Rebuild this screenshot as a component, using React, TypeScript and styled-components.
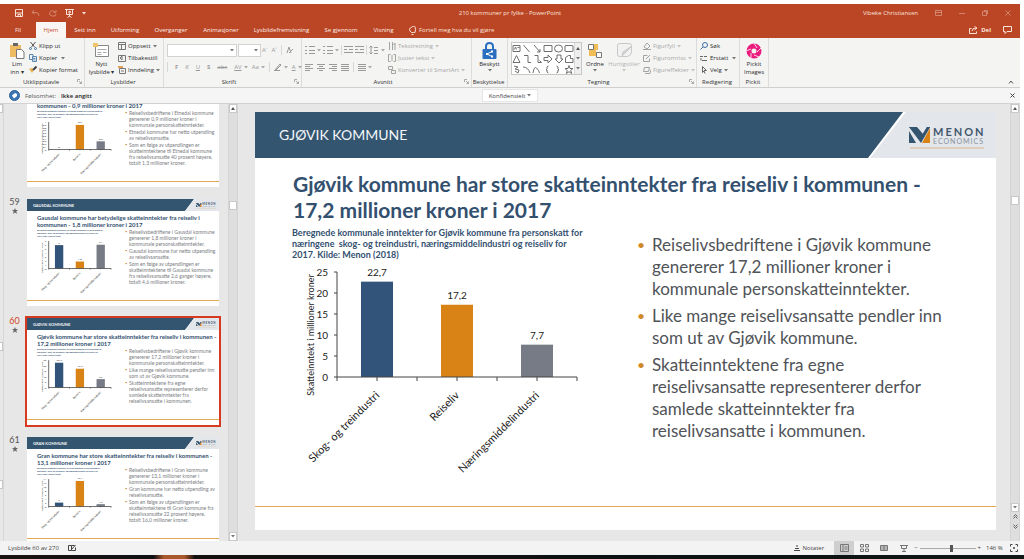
import React from "react";
import styled, { createGlobalStyle, css } from "styled-components";

const UI = '"Open Sans", "Noto Sans", sans-serif';
const SLIDE = 'Lato, "Open Sans", sans-serif';
const NAVY = "#34556f";
const ORANGE = "#d98317";
const GREY = "#767b86";

const GlobalStyle = createGlobalStyle`
  * { box-sizing: border-box; }
  body { margin: 0; background: #fff; font-family: ${UI}; color: #2b2b2b; }
  button, select, input { font: inherit; color: inherit; margin: 0; }
  svg { display: block; flex: none; }
`;

const Screen = styled.div`
  height: 100vh;
  min-width: 900px;
  display: flex;
  flex-direction: column;
  padding-top: 4px;
  overflow: hidden;
  font-size: 6px;
  line-height: 8px;
`;

const Window = styled.div`
  flex: 1;
  min-height: 0;
  margin-right: 4px;
  display: flex;
  flex-direction: column;
  background: #f4f4f3;
`;

/* ---------- title bar and tabs ---------- */

const Header = styled.header`
  background: #ba4626;
  color: #fbe3da;
`;

const TitleBar = styled.div`
  height: 18px;
  display: grid;
  grid-template-columns: 1fr auto 1fr;
  align-items: center;
`;

const QuickAccess = styled.div`
  display: flex;
  align-items: center;
  gap: 8px;
  padding-left: 15px;
`;

const WindowTools = styled.div`
  display: flex;
  align-items: center;
  justify-content: flex-end;
  gap: 17px;
  padding-right: 9px;
`;

const PlainButton = styled.button<{ $dim?: boolean }>`
  display: flex;
  align-items: center;
  gap: 3px;
  padding: 0;
  border: 0;
  background: none;
  white-space: nowrap;
  opacity: ${(p) => (p.$dim ? 0.4 : 1)};
`;

const TabBar = styled.nav`
  height: 16px;
  display: flex;
  align-items: stretch;
  padding-right: 8px;
`;

const Tab = styled.button<{ $active?: boolean; $w: number }>`
  width: ${(p) => p.$w}px;
  padding: 0;
  border: 0;
  white-space: nowrap;
  text-align: center;
  background: ${(p) => (p.$active ? "#f8f5f3" : "none")};
  color: ${(p) => (p.$active ? "#c2502f" : "#fdeee8")};
`;

const TabExtra = styled.div<{ $end?: boolean }>`
  display: flex;
  align-items: center;
  gap: 12px;
  margin-left: ${(p) => (p.$end ? "auto" : "7px")};
`;

/* ---------- ribbon ---------- */

const Ribbon = styled.div`
  height: 50px;
  display: flex;
  padding-left: 5px;
  border-bottom: 1px solid #cfcfcf;
`;

const GroupBox = styled.section<{ $w: number }>`
  width: ${(p) => p.$w}px;
  display: flex;
  flex-direction: column;
  border-right: 1px solid #dcdcdc;
`;

const GroupBody = styled.div<{ $center?: boolean }>`
  height: 38px;
  display: flex;
  gap: 3px;
  padding: 2px 0 0 3px;
  ${(p) =>
    p.$center &&
    css`
      justify-content: center;
      padding-left: 0;
    `}
`;

const GroupLabel = styled.div`
  display: flex;
  align-items: center;
  height: 11px;
  padding-right: 2px;
  color: #333;
  span {
    flex: 1;
    text-align: center;
    white-space: nowrap;
  }
`;

const BigButton = styled.button<{ $dim?: boolean; $w: number }>`
  width: ${(p) => p.$w}px;
  display: flex;
  flex-direction: column;
  align-items: center;
  gap: 1px;
  padding: 2px 0 0;
  border: 0;
  background: none;
  white-space: pre;
  text-align: center;
  opacity: ${(p) => (p.$dim ? 0.35 : 1)};
`;

const BigIcon = styled.span`
  height: 17px;
  display: grid;
  place-items: center;
`;

const Stack = styled.div`
  display: flex;
  flex-direction: column;
`;

const SmallButton = styled.button<{ $dim?: boolean }>`
  height: 12px;
  display: flex;
  align-items: center;
  gap: 2px;
  padding: 0;
  border: 0;
  background: none;
  white-space: nowrap;
  opacity: ${(p) => (p.$dim ? 0.4 : 1)};
`;

const ToolRow = styled.div<{ $gap: number; $h: number }>`
  height: ${(p) => p.$h}px;
  display: flex;
  align-items: center;
  gap: ${(p) => p.$gap}px;
  color: #9a9a9a;
`;

const FontSelect = styled.select<{ $w: number }>`
  appearance: none;
  width: ${(p) => p.$w}px;
  height: 13px;
  border: 1px solid #d2d2d2;
  border-radius: 0;
  background: #fff;
`;

const SelectWrap = styled.label`
  position: relative;
  display: flex;
  svg {
    position: absolute;
    right: 3px;
    top: 5px;
  }
`;

const Separator = styled.i`
  width: 1px;
  height: 10px;
  background: #d8d8d8;
`;

const Gallery = styled.div`
  display: flex;
  height: 33px;
  margin-top: 2px;
  border: 1px solid #c8c8c8;
  background: #fff;
`;

const GalleryScroll = styled.div`
  width: 7px;
  display: grid;
  grid-template-rows: repeat(3, 1fr);
  place-items: center;
  background: #efefef;
  border-left: 1px solid #d8d8d8;
`;

const Collapse = styled.div`
  margin-left: auto;
  display: flex;
  align-items: flex-end;
  padding: 0 6px 3px 0;
`;

const Sensitivity = styled.div`
  height: 16px;
  display: grid;
  grid-template-columns: 1fr auto 1fr;
  align-items: center;
  background: #f5f5f5;
  border-bottom: 1px solid #d2d2d2;
`;

const SensitivityLabel = styled.div`
  display: flex;
  align-items: center;
  gap: 5px;
  padding-left: 9px;
  color: #555;
  b {
    font-weight: 600;
    color: #222;
  }
`;

const SensitivityChoice = styled.button`
  height: 13px;
  padding: 0 6px;
  display: flex;
  align-items: center;
  gap: 2px;
  border: 1px solid #e6e6e6;
  background: #fff;
  color: #444;
`;

const CloseCell = styled.div`
  display: flex;
  justify-content: flex-end;
  padding-right: 5px;
`;

/* ---------- work area ---------- */

const Work = styled.main`
  flex: 1;
  min-height: 0;
  display: flex;
  background: #e7e7e7;
`;

const EdgeStrip = styled.div`
  width: 4px;
  display: flex;
  flex-direction: column;
  align-items: flex-start;
  border-right: 1px solid #d6d6d6;
  i {
    width: 3px;
    height: 9px;
    background: #fff;
    border: 1px solid #c6c6c6;
    border-left: 0;
  }
`;

const ThumbPane = styled.aside`
  width: 224px;
  overflow: hidden;
`;

const ThumbList = styled.ol`
  list-style: none;
  margin: -26px 0 0;
  padding: 0;
  display: flex;
  flex-direction: column;
  gap: 8px;
`;

const ThumbItem = styled.li`
  display: flex;
  align-items: flex-start;
`;

const ThumbNumber = styled.div<{ $active?: boolean }>`
  width: 21px;
  display: flex;
  flex-direction: column;
  align-items: center;
  gap: 1px;
  font: 9px/10px ${SLIDE};
  color: ${(p) => (p.$active ? "#d24726" : "#555")};
`;

const ThumbFrame = styled.div<{ $active?: boolean }>`
  width: 196px;
  height: 111px;
  display: flex;
  border: 2px solid ${(p) => (p.$active ? "#d63a20" : "transparent")};
`;

const ScrollTrack = styled.div`
  width: 10px;
  display: flex;
  flex-direction: column;
  align-items: center;
  background: #dedede;
  border-left: 1px solid #d4d4d4;
  border-right: 1px solid #d4d4d4;
`;

const ScrollBox = styled.button`
  width: 8px;
  height: 9px;
  display: grid;
  place-items: center;
  padding: 0;
  border: 1px solid #c9c9c9;
  background: #fff;
`;

const Spacer = styled.div<{ $grow: number }>`
  flex: ${(p) => p.$grow} 1 0;
`;

const SpreadButtons = styled.div`
  display: flex;
  flex-direction: column;
  align-items: center;
  gap: 5px;
  padding: 2px 0 12px;
`;

const Stage = styled.section`
  flex: 1;
  min-width: 0;
  display: flex;
  padding: 8px 14px 11px 17px;
`;

/* ---------- slide ---------- */

type Size = "large" | "small";

const SlideBox = styled.article`
  flex: 1;
  min-width: 0;
  display: flex;
  flex-direction: column;
  overflow: hidden;
  background: #fff;
  font-family: ${SLIDE};
`;

const Banner = styled.div<{ $size: Size }>`
  flex: none;
  display: flex;
  justify-content: space-between;
  background: #e3e6ea;
  height: ${(p) => (p.$size === "large" ? 46 : 12)}px;
`;

const BannerEdge = styled.div<{ $size: Size }>`
  flex: 1;
  display: flex;
  background: #fff;
  clip-path: polygon(0 0, 100% 0, calc(100% - ${(p) => (p.$size === "large" ? 36 : 10)}px) 100%, 0 100%);
`;

const BannerName = styled.h1<{ $size: Size }>`
  flex: 1;
  margin: 0;
  display: flex;
  align-items: center;
  background: ${NAVY};
  color: #f3f7fa;
  ${(p) =>
    p.$size === "large"
      ? css`
          padding-left: 24px;
          font: 400 14px/20px ${SLIDE};
          margin-right: 3px;
          clip-path: polygon(0 0, 100% 0, calc(100% - 35px) 100%, 0 100%);
        `
      : css`
          padding-left: 6px;
          font: 700 4px/5px ${SLIDE};
          margin-right: 1px;
          clip-path: polygon(0 0, 100% 0, calc(100% - 9px) 100%, 0 100%);
        `}
`;

const SlideTitle = styled.h2<{ $size: Size }>`
  margin: 0;
  color: #33506f;
  white-space: pre;
  ${(p) =>
    p.$size === "large"
      ? css`
          padding: 13px 0 0 38px;
          font: 700 21px/26px ${SLIDE};
        `
      : css`
          padding: 3px 0 0 10px;
          font: 700 6px/7px ${SLIDE};
        `}
`;

const Columns = styled.div<{ $size: Size }>`
  flex: 1;
  min-height: 0;
  display: grid;
  ${(p) =>
    p.$size === "large"
      ? css`
          grid-template-columns: 345px 1fr;
          padding: 4px 0 0 37px;
        `
      : css`
          grid-template-columns: 89px 1fr;
          padding: 1px 0 0 10px;
        `}
`;

const Caption = styled.p<{ $size: Size }>`
  margin: 0;
  white-space: pre;
  color: #33506f;
  ${(p) =>
    p.$size === "large"
      ? css`
          font: 700 9px/11px ${SLIDE};
        `
      : css`
          font: 700 2px/3px ${SLIDE};
        `}
`;

const Bullets = styled.ul<{ $size: Size }>`
  margin: 0;
  list-style: none;
  display: flex;
  flex-direction: column;
  li {
    position: relative;
    white-space: pre;
  }
  li::before {
    content: "•";
    position: absolute;
    color: #cf8a2a;
  }
  ${(p) =>
    p.$size === "large"
      ? css`
          padding: 7px 0 0 15px;
          gap: 5px;
          font: 17px/22px ${SLIDE};
          color: #505357;
          li::before {
            left: -15px;
            font-size: 14px;
          }
        `
      : css`
          padding: 0 0 0 3px;
          gap: 1px;
          font: 5px/6px ${SLIDE};
          color: #7a7d82;
          li::before {
            left: -4px;
            font-size: 4px;
          }
        `}
`;

const FootLine = styled.div<{ $size: Size }>`
  flex: none;
  border-top: 1px solid #e2a856;
  height: ${(p) => (p.$size === "large" ? 24 : 6)}px;
`;

interface SlideData {
  no: number;
  name: string;
  title: string;
  caption: string;
  max: number;
  step: number;
  values: number[];
  bullets: string[];
}

const caption = (k: string) =>
  `Beregnede kommunale inntekter for ${k} kommune fra personskatt for\nnæringene  skog- og treindustri, næringsmiddelindustri og reiseliv for\n2017. Kilde: Menon (2018)`;

const slides: SlideData[] = [
  {
    no: 58,
    name: "ETNEDAL KOMMUNE",
    title: "Etnedal kommune har skatteinntekter fra reiseliv i\nkommunen - 0,9 millioner kroner i 2017",
    caption: caption("Etnedal"),
    max: 1,
    step: 0.1,
    values: [0, 0.9, 0.3],
    bullets: [
      "Reiselivsbedriftene i Etnedal kommune\ngenererer 0,9 millioner kroner i\nkommunale personskatteinntekter.",
      "Etnedal kommune har netto utpendling\nav reiselivsansatte.",
      "Som en følge av utpendlingen er\nskatteinntektene til Etnedal kommune\nfra reiselivsansatte 40 prosent høyere,\ntotalt 1,3 millioner kroner.",
    ],
  },
  {
    no: 59,
    name: "GAUSDAL KOMMUNE",
    title: "Gausdal kommune har betydelige skatteinntekter fra reiseliv i\nkommunen - 1,8 millioner kroner i 2017",
    caption: caption("Gausdal"),
    max: 7,
    step: 1,
    values: [6, 1.8, 6.1],
    bullets: [
      "Reiselivsbedriftene i Gausdal kommune\ngenererer 1,8 millioner kroner i\nkommunale personskatteinntekter.",
      "Gausdal kommune har netto utpendling\nav reiselivsansatte.",
      "Som en følge av utpendlingen er\nskatteinntektene til Gausdal kommune\nfra reiselivsansatte 2,6 ganger høyere,\ntotalt 4,6 millioner kroner.",
    ],
  },
  {
    no: 60,
    name: "GJØVIK KOMMUNE",
    title: "Gjøvik kommune har store skatteinntekter fra reiseliv i kommunen -\n17,2 millioner kroner i 2017",
    caption: caption("Gjøvik"),
    max: 25,
    step: 5,
    values: [22.7, 17.2, 7.7],
    bullets: [
      "Reiselivsbedriftene i Gjøvik kommune\ngenererer 17,2 millioner kroner i\nkommunale personskatteinntekter.",
      "Like mange reiselivsansatte pendler inn\nsom ut av Gjøvik kommune.",
      "Skatteinntektene fra egne\nreiselivsansatte representerer derfor\nsamlede skatteinntekter fra\nreiselivsansatte i kommunen.",
    ],
  },
  {
    no: 61,
    name: "GRAN KOMMUNE",
    title: "Gran kommune har store skatteinntekter fra reiseliv i kommunen -\n13,1 millioner kroner i 2017",
    caption: caption("Gran"),
    max: 14,
    step: 2,
    values: [2, 13.1, 1.2],
    bullets: [
      "Reiselivsbedriftene i Gran kommune\ngenererer 13,1 millioner kroner i\nkommunale personskatteinntekter.",
      "Gran kommune har netto utpendling av\nreiselivsansatte.",
      "Som en følge av utpendlingen er\nskatteinntektene til Gran kommune fra\nreiselivsansatte 22 prosent høyere,\ntotalt 16,0 millioner kroner.",
    ],
  },
];

const norsk = (n: number) => String(Math.round(n * 10) / 10).replace(".", ",");

function Chart({ data, size }: { data: SlideData; size: Size }) {
  const large = size === "large";
  const base = 117;
  const top = 12;
  const left = 45;
  const y = (v: number) => base - (v / data.max) * (base - top);
  const ticks = Array.from({ length: Math.round(data.max / data.step) + 1 }, (_, i) => i * data.step);
  const fills = ["#33547a", ORANGE, GREY];
  const labels = ["Skog- og treindustri", "Reiseliv", "Næringsmiddelindustri"];
  return (
    <svg
      width={large ? 300 : 78}
      height={large ? 230 : 60}
      viewBox="0 0 300 230"
      fontFamily={SLIDE}
      fontSize="10"
      fill="#222"
      role="img"
      aria-label="Skatteinntekt i millioner kroner"
    >
      <text transform="translate(22 75) rotate(-90)" textAnchor="middle" fontSize="9">
        Skatteinntekt i millioner kroner
      </text>
      {ticks.map((t) => (
        <g key={t}>
          <path d={`M${left - 3} ${y(t)}H${left}`} stroke="#444" />
          <text x={left - 9} y={y(t) + 4} textAnchor="end">
            {norsk(t)}
          </text>
        </g>
      ))}
      {data.values.map((v, i) => {
        const cx = left + 40 + i * 80;
        return (
          <g key={i}>
            <rect x={cx - 16} y={y(v)} width="32" height={base - y(v)} fill={fills[i]} />
            <text x={cx} y={y(v) - 6} textAnchor="middle">
              {norsk(v)}
            </text>
            <path d={`M${cx} ${base}v4`} stroke="#444" />
            <text transform={`translate(${cx + 3} ${base + 19}) rotate(-45)`} textAnchor="end" fontSize="11">
              {labels[i]}
            </text>
          </g>
        );
      })}
      <path
        d={`M${left} ${top}V${base}H${left + 240}v4M${left} ${base}v4M${left + 80} ${base}v4M${left + 160} ${base}v4`}
        fill="none"
        stroke="#444"
        strokeWidth={large ? 1 : 3}
      />
    </svg>
  );
}

function Logo({ size }: { size: Size }) {
  const large = size === "large";
  return (
    <svg width={large ? 90 : 24} height={large ? 46 : 12} viewBox="2 0 90 46" fontFamily={SLIDE} role="img" aria-label="Menon Economics">
      <path d="M5 15h8l6 7 4-7h3l-7 12z" fill={NAVY} />
      <path d="M5 19v12h7z" fill={NAVY} />
      <path d="M26 16v15h-8z" fill={ORANGE} />
      <path d="M5 15h7l6 8 5-8h3L17 31z" fill={NAVY} />
      <text x="29" y="24" fontSize="11" fontWeight="700" fill="#43586e" letterSpacing="2">
        MENON
      </text>
      <text x="29" y="32" fontSize="7" fill="#8793a1" letterSpacing="1">
        ECONOMICS
      </text>
      <path d="M6 36h74" stroke="#d9b58a" strokeWidth="1" />
    </svg>
  );
}

function Slide({ data, size }: { data: SlideData; size: Size }) {
  return (
    <SlideBox>
      <Banner $size={size}>
        <BannerEdge $size={size}>
          <BannerName $size={size}>{data.name}</BannerName>
        </BannerEdge>
        <Logo size={size} />
      </Banner>
      <SlideTitle $size={size}>{data.title}</SlideTitle>
      <Columns $size={size}>
        <div>
          <Caption $size={size}>{data.caption}</Caption>
          <Chart data={data} size={size} />
        </div>
        <Bullets $size={size}>
          {data.bullets.map((b) => (
            <li key={b}>{b}</li>
          ))}
        </Bullets>
      </Columns>
      <FootLine $size={size} />
    </SlideBox>
  );
}

/* ---------- icons ---------- */

interface IcoProps {
  d?: string;
  w?: number;
  h?: number;
  c?: string;
  f?: string;
  children?: React.ReactNode;
}

const Ico = ({ d, w = 10, h = 10, c = "currentColor", f = "none", children }: IcoProps) => (
  <svg width={w} height={h} viewBox={`0 0 ${w} ${h}`} fill={f} stroke={c} strokeWidth="1" aria-hidden="true">
    {d && <path d={d} />}
    {children}
  </svg>
);

const Caret = ({ c = "#777" }: { c?: string }) => <Ico w={4} h={3} c="none" f={c} d="M0 0h4L2 2.5z" />;
const CaretUp = () => <Ico w={4} h={3} c="none" f="#555" d="M0 3h4L2 0z" />;
const Launcher = () => <Ico w={5} h={5} c="#aaa" d="M.5 3V.5H3M2 2l2.5 2.5M4.500 2.500v2h-2" />;
const Star = () => <Ico w={6} h={6} c="none" f="#666" d="M3 0l.8 2.1H6L4.300 3.500 5 6 3 4.500 1 6l.7-2.500L0 2.100h2.200z" />;

const lines = (rows: number[][]) => rows.map(([x1, x2, y]) => `M${x1} ${y}H${x2}`).join("");

const paragraph = {
  bullets: lines([[0, 2, 1.5], [4, 10, 1.5], [0, 2, 5.5], [4, 10, 5.5], [0, 2, 8.5], [4, 10, 8.5]]),
  left: lines([[0, 8, 2.5], [0, 5, 4.5], [0, 8, 6.5], [0, 5, 8.5]]),
  center: lines([[0, 8, 2.5], [2, 6, 4.5], [0, 8, 6.5], [2, 6, 8.5]]),
  right: lines([[0, 8, 2.5], [3, 8, 4.5], [0, 8, 6.5], [3, 8, 8.5]]),
  justify: lines([[0, 8, 2.5], [0, 8, 4.5], [0, 8, 6.5], [0, 8, 8.5]]),
  indent: lines([[0, 9, 1.5], [5, 9, 4.5], [0, 9, 7.5], [0, 3, 4.5]]),
  spacing: "M2 1v8M.5 2.500L2 1l1.500 1.500M.5 7.500L2 9l1.500-1.500M5 2.500h4M5 5.500h4M5 8.500h4",
};

const Shapes = () => (
  <Ico w={62} h={31} c="#6f6f6f">
    <path d="M1 2.500h7v6H1zM2.500 6.500l1-2.500 1 2.500M5.500 4.500h2M11.500 2l6 7M22 2l6 7M28 6v3h-3M32 2.500h8v6h-8zM53 3q0-.5.5-.5h7q.5 0 .5.5v5q0 .5-.5.5h-7q-.5 0-.5-.5z" />
    <ellipse cx="46.500" cy="5.500" rx="4" ry="3.500" />
    <path d="M1 19.500l3.500-7 3.500 7zM12 12.500h4v7h3M22.500 12.500H26v7h3.500l-2-2M32 14.500h4v-2.500l4 4-4 4v-2.500h-4zM45 12v4h-2l4 4 4-4h-2v-4zM53.500 19.500v-5l3-2h2v3h2.500v4z" />
    <path d="M2 23l4 1-3 2 4 1-1 3-3-2M11 24q5 0 7 6M21 30q1-7 3.500-5t3 5M36.500 23q-2 0-1.500 3l-1 1h1q-.5 3 1.500 3M44.500 23q2 0 1.500 3l1 1h-1q.5 3-1.500 3M57 22.500l1 3h3l-2.300 2 1 3-2.700-1.800-2.700 1.800 1-3-2.300-2h3z" />
  </Ico>
);

const IconPaste = () => (
  <Ico w={16} h={17}>
    <path d="M1 3h11v12H1z" fill="#eebb62" stroke="none" />
    <path d="M4 1h5v3H4z" fill="#666" stroke="none" />
    <path d="M7.500 7.500h5l2.500 2.500v6.500H7.500z" fill="#fff" stroke="#777" />
  </Ico>
);
const IconNewSlide = () => (
  <Ico w={17} h={15}>
    <path d="M2.500 2.500h13v11h-13z" fill="#fff" stroke="#888" />
    <path d="M4.500 6.500h9M4.500 9.500h4M10 9.500h3.500M4.500 11.500h4" stroke="#aaa" />
    <path d="M0 0h5v4H0z" fill="#f0c468" stroke="none" />
  </Ico>
);
const IconLock = () => (
  <Ico w={15} h={17}>
    <path d="M4 8V4.500Q4 1 7.500 1T11 4.500V8" stroke="#2a6fc0" strokeWidth="2" />
    <rect x="0.500" y="7" width="14" height="10" rx="1" fill="#2a6fc0" stroke="none" />
    <path d="M10 9.500L5 12l5 2.500" stroke="#fff" />
    <path d="M9 8.500h2v2H9zM9 13.500h2v2H9zM4 11h2v2H4z" fill="#fff" stroke="none" />
  </Ico>
);
const IconArrange = () => (
  <Ico w={16} h={15}>
    <path d="M4 1h7v6H4zM2 7h7v6H2z" fill="#f0bd57" stroke="none" />
    <path d="M1.500 1.500h5v5h-5zM9.500 9.500h5v5h-5z" fill="#fff" stroke="#777" />
  </Ico>
);
const IconStyles = () => (
  <Ico w={17} h={15} c="#777">
    <path d="M1.500 2.500q0-2 2-2h10q2 0 2 2v6q0 4-4 5h-8q-2 0-2-2z" fill="#eee" />
    <path d="M16 3L9 10l-3 3 1-4z" fill="#999" />
  </Ico>
);
const IconPickit = () => (
  <Ico w={16} h={16}>
    <circle cx="8" cy="8" r="5" stroke="#ea1c7d" strokeWidth="5" />
    <path d="M8 0l3 5M15 5l-4 4M13 14l-5-2M5 15v-5M0 8l5-2" stroke="#fbd2e5" />
  </Ico>
);

const Glyph = styled.button<{ $style?: "bold" | "italic" | "underline" | "strike" }>`
  padding: 0;
  border: 0;
  background: none;
  line-height: 8px;
  font-weight: ${(p) => (p.$style === "bold" ? 700 : 400)};
  font-style: ${(p) => (p.$style === "italic" ? "italic" : "normal")};
  text-decoration: ${(p) => (p.$style === "underline" ? "underline" : p.$style === "strike" ? "line-through" : "none")};
`;

const IconButton = styled.button`
  padding: 0;
  border: 0;
  background: none;
  display: flex;
  align-items: center;
  gap: 2px;
`;

interface GroupProps {
  label: string;
  w: number;
  launcher?: boolean;
  center?: boolean;
  children: React.ReactNode;
}

function Group({ label, w, launcher, center, children }: GroupProps) {
  return (
    <GroupBox $w={w} aria-label={label}>
      <GroupBody $center={center}>{children}</GroupBody>
      <GroupLabel>
        <span>{label}</span>
        {launcher && <Launcher />}
      </GroupLabel>
    </GroupBox>
  );
}

/* ---------- status bar ---------- */

const Status = styled.footer`
  height: 14px;
  display: flex;
  align-items: center;
  padding: 0 2px 0 8px;
  gap: 9px;
  background: #f3f3f3;
  color: #444;
`;

const StatusRight = styled.div`
  margin-left: auto;
  display: flex;
  align-items: center;
`;

const NotesButton = styled(PlainButton)`
  margin-right: 10px;
`;

const ViewButton = styled.button<{ $active?: boolean }>`
  width: 20px;
  height: 14px;
  padding: 0;
  display: grid;
  place-items: center;
  border: 0;
  color: #777;
  background: ${(p) => (p.$active ? "#cfcfcf" : "none")};
`;

const ZoomRange = styled.input`
  appearance: none;
  width: 56px;
  height: 8px;
  margin: 0 2px;
  background: linear-gradient(#aaa, #aaa) center / 100% 1px no-repeat;
  &::-webkit-slider-thumb {
    appearance: none;
    width: 3px;
    height: 7px;
    background: #555;
  }
`;

const ZoomValue = styled.span`
  width: 29px;
  padding-left: 5px;
  white-space: nowrap;
`;

const Taskbar = styled.div`
  flex: none;
  height: 4px;
  background: linear-gradient(90deg, #1a1310 0, #101014 15%, #a8582a 16%, #a8582a 18%, #14100f 19%, #0c1012 60%, #101515 100%);
`;

export default function App() {
  const current = slides[2];
  return (
    <Screen>
      <GlobalStyle />
      <Window>
        <Header>
          <TitleBar>
            <QuickAccess>
              <PlainButton aria-label="Lagre">
                <Ico w={8} h={8} d="M.5.5h7v7h-7zM.5 4h7M3 7.500v-2h2.500v2" />
              </PlainButton>
              <PlainButton $dim aria-label="Angre">
                <Ico w={9} h={8} d="M3 1L1 3.500 3.500 5M1 3.500h4q3 0 3 3.500" />
              </PlainButton>
              <PlainButton $dim aria-label="Gjenta">
                <Ico w={9} h={8} d="M7 3Q4 0 2 3t2 4 4-2M8 1v2.500H5.500" />
              </PlainButton>
              <PlainButton aria-label="Start fremvisning">
                <Ico w={9} h={9} d="M0 .5h9M1.500.5v5h6v-5M4.500 5.500v2M2.500 8.500l2-1.500 2 1.500M4 2v2.500L6 3z" />
              </PlainButton>
              <PlainButton aria-label="Tilpass">
                <Caret c="#fbe3da" />
              </PlainButton>
            </QuickAccess>
            <span>210 kommuner pr fylke  -  PowerPoint</span>
            <WindowTools>
              <span>Vibeke Christiansen</span>
              <PlainButton $dim aria-label="Alternativer for båndet">
                <Ico w={7} h={6} d="M.5.5h6v5h-6zM.5 2.500h6" />
              </PlainButton>
              <PlainButton $dim aria-label="Minimer">
                <Ico w={6} h={6} d="M0 3.500h6" />
              </PlainButton>
              <PlainButton $dim aria-label="Gjenopprett">
                <Ico w={6} h={6} d="M.5 1.500h4v4h-4zM2 .5h3.500V4" />
              </PlainButton>
              <PlainButton $dim aria-label="Lukk">
                <Ico w={6} h={6} d="M.5.5l5 5M5.500.5l-5 5" />
              </PlainButton>
            </WindowTools>
          </TitleBar>
          <TabBar>
            <Tab $w={36}>Fil</Tab>
            <Tab $w={30} $active>Hjem</Tab>
            <Tab $w={38}>Sett inn</Tab>
            <Tab $w={42}>Utforming</Tab>
            <Tab $w={50}>Overganger</Tab>
            <Tab $w={50}>Animasjoner</Tab>
            <Tab $w={71}>Lysbildefremvisning</Tab>
            <Tab $w={48}>Se gjennom</Tab>
            <Tab $w={37}>Visning</Tab>
            <TabExtra>
              <PlainButton>
                <Ico w={7} h={9} d="M2.500 6.500Q.5 5 .5 3.500T3.500.5t3 3-2 3zM2.500 8.500h2" />
                Fortell meg hva du vil gjøre
              </PlainButton>
            </TabExtra>
            <TabExtra $end>
              <PlainButton>
                <Ico w={9} h={8} d="M2.500 2.500h-2v5h7v-2M3 5q0-3 4-3M5.500.5L8 2 5.500 4" />
                <b>Del</b>
              </PlainButton>
              <PlainButton aria-label="Kommentarer">
                <Ico w={9} h={8} d="M.5.5h8v5H4l-2 2v-2H.5z" />
              </PlainButton>
            </TabExtra>
          </TabBar>
        </Header>

        <Ribbon>
          <Group label="Utklippstavle" w={80} launcher>
            <BigButton $w={18}>
              <BigIcon><IconPaste /></BigIcon>
              <span>{"Lim\ninn ▾"}</span>
            </BigButton>
            <Stack>
              <SmallButton>
                <Ico w={8} h={8} c="#3c6ea5">
                  <path d="M1.500 0l4 5M6.500 0l-4 5" stroke="#555" />
                  <circle cx="1.500" cy="6.500" r="1" />
                  <circle cx="6.500" cy="6.500" r="1" />
                </Ico>
                Klipp ut
              </SmallButton>
              <SmallButton>
                <Ico w={8} h={8} c="#5c87b2" d="M.5.5h3.500v5H.5zM4 2.500h3.500v5H3.500v-5zM4.500 4.500h2M4.500 6h2" />
                Kopier&nbsp; <Caret />
              </SmallButton>
              <SmallButton>
                <Ico w={8} h={8} c="#444">
                  <path d="M0 3l3-1 2 2-2 3z" fill="#e6b455" stroke="none" />
                  <path d="M4 4l3.500-3.500" strokeWidth="2" />
                </Ico>
                Kopier format
              </SmallButton>
            </Stack>
          </Group>
          <Group label="Lysbilder" w={79}>
            <BigButton $w={27}>
              <BigIcon><IconNewSlide /></BigIcon>
              <span>{"Nytt\nlysbilde ▾"}</span>
            </BigButton>
            <Stack>
              <SmallButton><Ico w={8} h={8} c="#777" d="M.5.5h7v7h-7zM.5 2.500h7M3.500 2.500v5" />Oppsett <Caret /></SmallButton>
              <SmallButton><Ico w={8} h={8} c="#777" d="M.5 1.500h7v6h-7zM2 4l2-2v4z" />Tilbakestill</SmallButton>
              <SmallButton>
                <Ico w={8} h={8} c="#777">
                  <path d="M1.500 2.500h6v5h-6zM3 5h3" />
                  <path d="M0 0h5v2H0z" fill="#e6a15a" stroke="none" />
                </Ico>
                Inndeling <Caret />
              </SmallButton>
            </Stack>
          </Group>
          <Group label="Skrift" w={138} launcher>
            <Stack>
              <ToolRow $h={20} $gap={1}>
                <SelectWrap aria-label="Skrift"><FontSelect $w={70} defaultValue=""><option value="" /></FontSelect><Caret /></SelectWrap>
                <SelectWrap aria-label="Skriftstørrelse"><FontSelect $w={23} defaultValue=""><option value="" /></FontSelect><Caret /></SelectWrap>
                <ToolRow $h={12} $gap={4}>
                  <Glyph>A˄</Glyph>
                  <Glyph>A˅</Glyph>
                  <Separator />
                  <IconButton aria-label="Fjern formatering"><Ico w={8} h={8} d="M1 7l2-6 2 6M3 7l4-4" /></IconButton>
                </ToolRow>
              </ToolRow>
              <ToolRow $h={14} $gap={7}>
                <Separator />
                <Glyph $style="bold">F</Glyph>
                <Glyph $style="italic">K</Glyph>
                <Glyph $style="underline">U</Glyph>
                <Glyph $style="bold">S</Glyph>
                <Glyph $style="strike">abc</Glyph>
                <ToolRow $h={14} $gap={4}>
                  <IconButton><u>AV</u><Caret c="#aaa" /></IconButton>
                  <IconButton>Aa<Caret c="#aaa" /></IconButton>
                  <Separator />
                  <IconButton aria-label="Uthevingsfarge"><Ico w={8} h={8} d="M1 7l5-6 1 1-5 5zM0 7.500h6" /><Caret c="#aaa" /></IconButton>
                  <IconButton><u>A</u><Caret c="#aaa" /></IconButton>
                </ToolRow>
              </ToolRow>
            </Stack>
          </Group>
          <Group label="Avsnitt" w={170} launcher>
            <Stack>
              <ToolRow $h={20} $gap={2}>
                <IconButton aria-label="Punktliste"><Ico d={paragraph.bullets} /><Caret c="#aaa" /></IconButton>
                <IconButton aria-label="Nummerering"><Ico d={paragraph.bullets} /><Caret c="#aaa" /></IconButton>
                <Separator />
                <IconButton aria-label="Reduser innrykk"><Ico w={9} d={paragraph.indent} /></IconButton>
                <IconButton aria-label="Øk innrykk"><Ico w={9} d={paragraph.indent} /></IconButton>
                <Separator />
                <IconButton aria-label="Linjeavstand"><Ico d={paragraph.spacing} /><Caret c="#aaa" /></IconButton>
              </ToolRow>
              <ToolRow $h={14} $gap={4}>
                <IconButton aria-label="Venstrejuster"><Ico w={8} d={paragraph.left} /></IconButton>
                <IconButton aria-label="Midtstill"><Ico w={8} d={paragraph.center} /></IconButton>
                <IconButton aria-label="Høyrejuster"><Ico w={8} d={paragraph.right} /></IconButton>
                <IconButton aria-label="Blokkjuster"><Ico w={8} d={paragraph.justify} /></IconButton>
                <Separator />
                <IconButton aria-label="Kolonner"><Ico w={8} d={paragraph.justify} /><Caret c="#aaa" /></IconButton>
              </ToolRow>
            </Stack>
            <Stack>
              <SmallButton $dim><Ico w={8} h={8} d="M1.500 0v8M4.500 0v8M7 8V1L5.500 3" />Tekstretning <Caret /></SmallButton>
              <SmallButton $dim><Ico w={8} h={8} d="M2.500.5h-2v7h2M5.500.5h2v7h-2M4 1v6" />Juster tekst <Caret /></SmallButton>
              <SmallButton $dim><Ico w={8} h={8} d="M.5.5h4v3h-4zM3.500 4.500h4v3h-4z" />Konverter til SmartArt <Caret /></SmallButton>
            </Stack>
          </Group>
          <Group label="Beskyttelse" w={36} center>
            <BigButton $w={28}>
              <BigIcon><IconLock /></BigIcon>
              <span>Beskytt</span>
              <Caret />
            </BigButton>
          </Group>
          <Group label="Tegning" w={189} launcher>
            <Gallery>
              <Shapes />
              <GalleryScroll><CaretUp /><Caret /><Caret /></GalleryScroll>
            </Gallery>
            <BigButton $w={20}>
              <BigIcon><IconArrange /></BigIcon>
              <span>Ordne</span>
              <Caret />
            </BigButton>
            <BigButton $w={32} $dim>
              <BigIcon><IconStyles /></BigIcon>
              <span>Hurtigstiler</span>
              <Caret />
            </BigButton>
            <Stack>
              <SmallButton $dim><Ico w={8} h={8} d="M1 5l3-4 3 3-3 3zM0 7.500h8" />Figurfyll <Caret /></SmallButton>
              <SmallButton $dim><Ico w={8} h={8} d="M.5 1.500h4M.5 1.500v6h6v-3M3 5l4-4" />Figuromriss <Caret /></SmallButton>
              <SmallButton $dim><Ico w={8} h={8} d="M1.500 1.500h5l-1 4h-5zM2 7.500h5l1-4" />Figureffekter <Caret /></SmallButton>
            </Stack>
          </Group>
          <Group label="Redigering" w={43}>
            <Stack>
              <SmallButton><Ico w={8} h={8} c="#3c6ea5"><circle cx="5" cy="3" r="2.500" /><path d="M3 5L.5 7.500" /></Ico>Søk</SmallButton>
              <SmallButton><Ico w={8} h={8} c="#666" d="M0 2.500h3M4 2.500h3M2 6.500h5M1 4v2.500" />Erstatt&nbsp; <Caret /></SmallButton>
              <SmallButton><Ico w={8} h={8} c="#666" d="M2.500.5v6l1.500-1.500 1 2.500M2.500.5l4 4H4" />Velg <Caret /></SmallButton>
            </Stack>
          </Group>
          <Group label="Pickit" w={29} center>
            <BigButton $w={25}>
              <BigIcon><IconPickit /></BigIcon>
              <span>{"Pickit\nImages"}</span>
            </BigButton>
          </Group>
          <Collapse>
            <PlainButton aria-label="Skjul båndet"><Ico w={6} h={4} c="#555" d="M1 3.500L3 1l2 2.500" /></PlainButton>
          </Collapse>
        </Ribbon>

        <Sensitivity>
          <SensitivityLabel>
            <Ico w={11} h={11} c="#2f6296">
              <circle cx="5.500" cy="5.500" r="5" fill="#3a77b5" />
              <path d="M3 5.500L6 3l2 1v2L5 8.500z" fill="#fff" stroke="none" />
            </Ico>
            <span>Følsomhet:</span>
            <b>Ikke angitt</b>
          </SensitivityLabel>
          <SensitivityChoice>Konfidensielt <Caret /></SensitivityChoice>
          <CloseCell>
            <PlainButton aria-label="Lukk feltet"><Ico w={5} h={5} c="#444" d="M.5.5l4 4M4.500.5l-4 4" /></PlainButton>
          </CloseCell>
        </Sensitivity>

        <Work>
          <EdgeStrip>
            <i />
            <Spacer $grow={229} />
            <i />
            <Spacer $grow={129} />
            <i />
            <Spacer $grow={52} />
          </EdgeStrip>
          <ThumbPane>
            <ThumbList>
              {slides.map((s) => {
                const active = s === current;
                return (
                  <ThumbItem key={s.no}>
                    <ThumbNumber $active={active}>
                      {s.no}
                      <Star />
                    </ThumbNumber>
                    <ThumbFrame $active={active}>
                      <Slide data={s} size="small" />
                    </ThumbFrame>
                  </ThumbItem>
                );
              })}
            </ThumbList>
          </ThumbPane>
          <ScrollTrack>
            <ScrollBox aria-label="Rull opp"><CaretUp /></ScrollBox>
            <Spacer $grow={88} />
            <ScrollBox aria-label="Rullefelt" />
            <Spacer $grow={322} />
            <ScrollBox aria-label="Rull ned"><Caret /></ScrollBox>
          </ScrollTrack>
          <Stage>
            <Slide data={current} size="large" />
          </Stage>
          <ScrollTrack>
            <ScrollBox aria-label="Rull opp"><CaretUp /></ScrollBox>
            <Spacer $grow={83} />
            <ScrollBox aria-label="Rullefelt" />
            <Spacer $grow={298} />
            <ScrollBox aria-label="Rull ned"><Caret /></ScrollBox>
            <SpreadButtons>
              <Ico w={5} h={5} c="#666" d="M.5 2.500l2-2 2 2M.5 4.500l2-2 2 2" />
              <Ico w={5} h={5} c="#666" d="M.5.5l2 2 2-2M.5 2.500l2 2 2-2" />
            </SpreadButtons>
          </ScrollTrack>
        </Work>

        <Status>
          <span>Lysbilde 60 av 270</span>
          <Ico w={8} h={8} d="M.5 1.500h3v5h-3zM3.500 1.500h3M3.500 6.500h4v-3M4 5l3.500-4" />
          <StatusRight>
            <NotesButton><Ico w={6} h={7} d="M3 0v2M1 3.500h4M0 5.500h6" />Notater</NotesButton>
            <ViewButton $active aria-label="Normal"><Ico w={9} h={8} d="M.5.5h8v7h-8zM3 .5v7M4.500 3h3M4.500 5h3" /></ViewButton>
            <ViewButton aria-label="Lysbildesortering"><Ico w={9} h={8} d="M.5.5h3v2.500h-3zM5.500.5h3v2.500h-3zM.5 5h3v2.500h-3zM5.500 5h3v2.500h-3z" /></ViewButton>
            <ViewButton aria-label="Lesevisning"><Ico w={8} h={8} d="M.5 1.500h3.500v5H.5zM4 1.500h3.500v5H4zM2 2v4M6 2v4" /></ViewButton>
            <ViewButton aria-label="Lysbildefremvisning"><Ico w={8} h={8} d="M0 1.500h8M1.500 1.500v3h5v-3M4 4.500v3M2 7.500h4" /></ViewButton>
            <PlainButton aria-label="Zoom ut">−</PlainButton>
            <ZoomRange type="range" min={0} max={100} defaultValue={58} aria-label="Zoom" />
            <PlainButton aria-label="Zoom inn">+</PlainButton>
            <ZoomValue>146 %</ZoomValue>
            <PlainButton aria-label="Tilpass til vindu"><Ico w={8} h={8} d="M.5 2.500v-2h2M5.500.5h2v2M7.500 5.500v2h-2M2.500 7.500h-2v-2M3 4h2M4 3v2" /></PlainButton>
          </StatusRight>
        </Status>
      </Window>
      <Taskbar />
    </Screen>
  );
}
